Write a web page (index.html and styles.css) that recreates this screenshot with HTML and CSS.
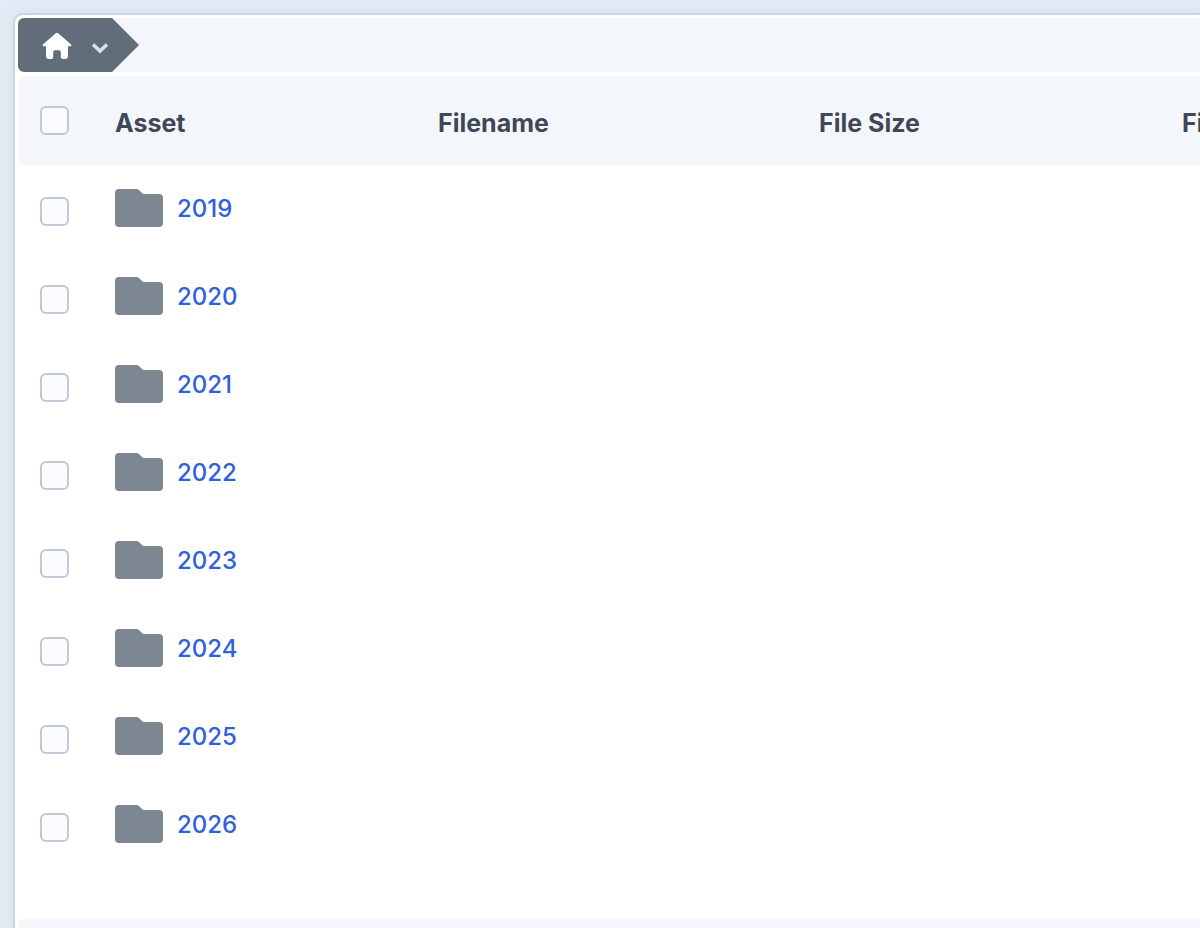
FILE: index.html
```html
<!DOCTYPE html>
<html lang="en">
<head>
    <meta charset="UTF-8">
    <meta name="viewport" content="width=device-width, initial-scale=1.0">
    <title>Assets</title>
    <link rel="stylesheet" href="styles.css">
</head>
<body>
    <!-- shared icons -->
    <svg class="sprite" aria-hidden="true">
        <symbol id="folder" viewBox="0 0 48 38">
            <path d="M4 0h17q2 0 3 1l3 3q1 1 2 1h15q4 0 4 4v25q0 4-4 4H4q-4 0-4-4V4q0-4 4-4z"/>
        </symbol>
    </svg>

    <main class="panel">
        <nav class="breadcrumb" aria-label="Breadcrumb">
            <div class="crumb">
                <a href="#" class="home" aria-label="Home">
                    <svg viewBox="0 0 30 28" width="30" height="28">
                        <path d="M13.800 1.200Q15 .2 16.200 1.200L28.800 12.200Q29.600 13 29.300 13.700Q29 14.200 28 14.200H26V24Q26 27 23 27H20.800Q18.800 27 18.800 25V20Q18.800 18.200 17 18.200H13Q11.200 18.200 11.200 20V25Q11.200 27 9.200 27H7Q4 27 4 24V14.200H2Q1 14.200 .7 13.700Q.4 13 1.200 12.200Z"/>
                    </svg>
                </a>
                <button type="button" class="toggle" aria-label="Show folders">
                    <svg viewBox="0 0 18 12" width="18" height="12">
                        <path d="M2 2.500L9 9L16 2.500"/>
                    </svg>
                </button>
            </div>
        </nav>

        <table class="assets">
            <colgroup>
                <col class="col-check">
                <col class="col-asset">
                <col class="col-name">
                <col class="col-size">
                <col>
            </colgroup>
            <thead>
                <tr>
                    <th><input type="checkbox" aria-label="Select all"></th>
                    <th scope="col">Asset</th>
                    <th scope="col">Filename</th>
                    <th scope="col">File Size</th>
                    <th scope="col">Fi</th>
                </tr>
            </thead>
            <tbody>
                <tr>
                    <td><input type="checkbox" aria-labelledby="f2019"></td>
                    <td colspan="4"><a href="#" class="folder" id="f2019"><svg><use href="#folder"/></svg>2019</a></td>
                </tr>
                <tr>
                    <td><input type="checkbox" aria-labelledby="f2020"></td>
                    <td colspan="4"><a href="#" class="folder" id="f2020"><svg><use href="#folder"/></svg>2020</a></td>
                </tr>
                <tr>
                    <td><input type="checkbox" aria-labelledby="f2021"></td>
                    <td colspan="4"><a href="#" class="folder" id="f2021"><svg><use href="#folder"/></svg>2021</a></td>
                </tr>
                <tr>
                    <td><input type="checkbox" aria-labelledby="f2022"></td>
                    <td colspan="4"><a href="#" class="folder" id="f2022"><svg><use href="#folder"/></svg>2022</a></td>
                </tr>
                <tr>
                    <td><input type="checkbox" aria-labelledby="f2023"></td>
                    <td colspan="4"><a href="#" class="folder" id="f2023"><svg><use href="#folder"/></svg>2023</a></td>
                </tr>
                <tr>
                    <td><input type="checkbox" aria-labelledby="f2024"></td>
                    <td colspan="4"><a href="#" class="folder" id="f2024"><svg><use href="#folder"/></svg>2024</a></td>
                </tr>
                <tr>
                    <td><input type="checkbox" aria-labelledby="f2025"></td>
                    <td colspan="4"><a href="#" class="folder" id="f2025"><svg><use href="#folder"/></svg>2025</a></td>
                </tr>
                <tr>
                    <td><input type="checkbox" aria-labelledby="f2026"></td>
                    <td colspan="4"><a href="#" class="folder" id="f2026"><svg><use href="#folder"/></svg>2026</a></td>
                </tr>
            </tbody>
        </table>

        <footer class="panel-footer"></footer>
    </main>
</body>
</html>
```
FILE: styles.css
```css
:root {
    --bar: #f3f7fc;
    --slate: #616d79;
    --folder: #7d8791;
    --text: #3f4856;
    --link: #325fdb;
}

* {
    box-sizing: border-box;
}

body {
    display: flex;
    flex-direction: column;
    margin: 0;
    height: 100vh;
    overflow: hidden;
    padding: 13px 0 0 13px;
    background: #e5ebf5;
    color: var(--text);
    font: 25px/32px Inter, "Liberation Sans", sans-serif;
}

.sprite {
    display: none;
}

/* the panel runs off the right edge */
.panel {
    display: flex;
    flex: 1;
    flex-direction: column;
    margin-right: -20px;
    padding: 3px 3px 0;
    border: 2px solid #cdd3dc;
    border-bottom: 0;
    border-radius: 10px 10px 0 0;
    background: #fff;
    box-shadow: 0 2px 24px rgba(80, 110, 150, 0.08);
}

/* breadcrumb */
.breadcrumb {
    height: 54px;
    margin-bottom: 4px;
    border-radius: 6px;
    background: var(--bar);
}

.crumb {
    display: flex;
    align-items: center;
    width: 121px;
    height: 100%;
    padding: 2px 0 0 24px;
    gap: 19px;
    border-radius: 6px 0 0 6px;
    background: var(--slate);
    clip-path: polygon(0 0, 94px 0, 100% 50%, 94px 100%, 0 100%);
}

.home,
.toggle {
    display: flex;
}

.home svg {
    fill: #fff;
}

.toggle {
    padding: 3px 0 0;
    border: 0;
    background: none;
}

.toggle path {
    fill: none;
    stroke: #dce2e9;
    stroke-width: 3.600;
}

/* table */
.assets {
    width: 100%;
    table-layout: fixed;
    border-collapse: separate;
    border-spacing: 0;
}

.col-check { width: 97px; }
.col-asset { width: 323px; }
.col-name { width: 381px; }
.col-size { width: 363px; }

th,
td {
    padding: 4px 0 0;
    text-align: left;
}

th {
    height: 89px;
    background: var(--bar);
    font-weight: 700;
    white-space: nowrap;
}

td {
    height: 88px;
}

th:first-child {
    padding: 0 0 0 22px;
    border-radius: 8px 0 0 8px;
}

td:first-child {
    padding-left: 22px;
}

input[type="checkbox"] {
    appearance: none;
    display: block;
    width: 29px;
    height: 29px;
    margin: 0;
    border: 2px solid #c1c8d6;
    border-radius: 6px;
    background: #fbfcff;
}

.folder {
    display: inline-flex;
    align-items: end;
    gap: 14px;
    color: var(--link);
    font-size: 24px;
    font-weight: 500;
    line-height: 36px;
    text-decoration: none;
}

.folder svg {
    width: 48px;
    height: 38px;
    fill: var(--folder);
}

.panel-footer {
    flex: 1;
    margin-top: 50px;
    border-radius: 6px 0 0 0;
    background: var(--bar);
}
```
